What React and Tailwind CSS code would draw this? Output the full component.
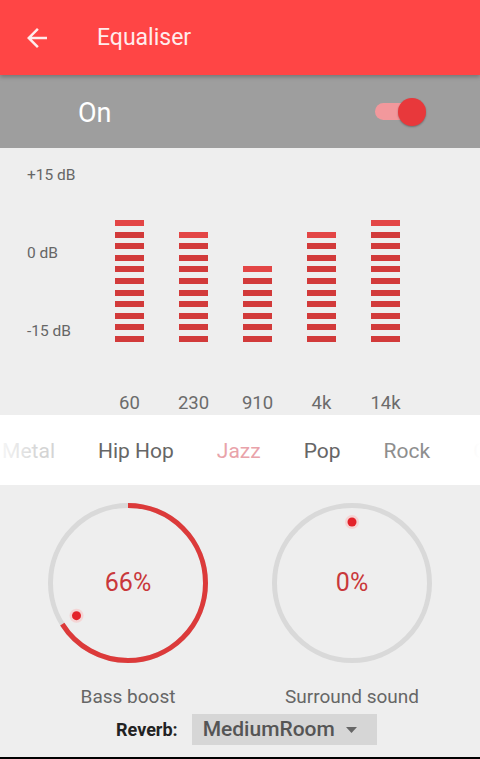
import React from 'react';

const bars = [
  { freq: '60', segs: 11 },
  { freq: '230', segs: 10 },
  { freq: '910', segs: 7 },
  { freq: '4k', segs: 10 },
  { freq: '14k', segs: 11 },
];

const presets = [
  { name: 'Hip Hop', cls: 'text-[#666666]' },
  { name: 'Jazz', cls: 'text-[#e9a3aa]' },
  { name: 'Pop', cls: 'text-[#666666]' },
  { name: 'Rock', cls: 'text-[#8e8e8e]' },
  { name: 'Custom', cls: 'text-[#eeeeee]' },
];

function Knob({ value, label }) {
  const r = 77.5;
  const c = 2 * Math.PI * r;
  const angle = (value / 100) * 2 * Math.PI;
  const dx = 80 + 61 * Math.sin(angle);
  const dy = 80 - 61 * Math.cos(angle);
  return (
    <div className="flex flex-col items-center">
      <div className="relative w-[160px] h-[160px]">
        <svg width="160" height="160" viewBox="0 0 160 160">
          <circle cx="80" cy="80" r={r} fill="none" stroke="#d9d9d9" strokeWidth="5" />
          {value > 0 && (
            <circle
              cx="80"
              cy="80"
              r={r}
              fill="none"
              stroke="#dc3a3a"
              strokeWidth="5"
              strokeDasharray={`${(value / 100) * c} ${c}`}
              transform="rotate(-90 80 80)"
            />
          )}
          <circle cx={dx} cy={dy} r="7" fill="#f7c9c9" opacity="0.7" />
          <circle cx={dx} cy={dy} r="4.5" fill="#e3222a" />
        </svg>
        <div className="absolute inset-0 flex items-center justify-center text-[25px] text-[#c9383a]">
          {value}%
        </div>
      </div>
      <div className="mt-[23px] text-[19px] leading-[22px] text-[#666666]">{label}</div>
    </div>
  );
}

export default function App() {
  return (
    <div
      className="w-[480px] h-[759px] overflow-hidden bg-[#eeeeee] flex flex-col"
      style={{ fontFamily: 'Roboto, "Noto Sans", sans-serif' }}
    >
      {/* toolbar */}
      <div className="relative z-10 h-[75px] shrink-0 bg-[#ff4545] flex items-center shadow-[0_2px_4px_rgba(0,0,0,0.25)]">
        <svg className="ml-[22px]" width="30" height="30" viewBox="0 0 24 24" fill="#ffecec">
          <path d="M20 11H7.83l5.59-5.59L12 4l-8 8 8 8 1.41-1.41L7.83 13H20v-2z" />
        </svg>
        <div className="ml-[45px] mt-[2px] text-[23px] text-[#ffecec]">Equaliser</div>
      </div>

      {/* on switch */}
      <div className="h-[73px] shrink-0 bg-[#9e9e9e] flex items-center">
        <div className="ml-[78px] mt-[4px] text-[27px] text-white">On</div>
        <div className="ml-auto mr-[54px] relative w-[51px] h-[28px] flex items-center">
          <div className="w-[38px] h-[17px] rounded-full bg-[#f2989c]" />
          <div className="absolute right-0 top-0 w-[28px] h-[28px] rounded-full bg-[#e8383b] shadow-[0_1px_2px_rgba(0,0,0,0.3)]" />
        </div>
      </div>

      {/* eq */}
      <div className="h-[267px] shrink-0 flex">
        <div className="w-[115px] shrink-0 pl-[27px] pt-[18px] flex flex-col gap-[60px] text-[15.5px] leading-[18px] text-[#666666]">
          <div>+15 dB</div>
          <div>0 dB</div>
          <div>-15 dB</div>
        </div>
        <div className="flex flex-col">
          <div className="h-[194px] flex items-end gap-[35px]">
            {bars.map((b) => (
              <div key={b.freq} className="w-[29px] flex flex-col gap-[5.6px]">
                {Array.from({ length: b.segs }).map((_, i) => (
                  <div
                    key={i}
                    className={`h-[6px] ${i === 0 ? 'bg-[#e34545]' : 'bg-[#d23a3a]'}`}
                  />
                ))}
              </div>
            ))}
          </div>
          <div className="mt-[50px] flex gap-[35px]">
            {bars.map((b) => (
              <div
                key={b.freq}
                className="w-[29px] flex justify-center whitespace-nowrap text-[18.5px] leading-[22px] text-[#6b6b6b]"
              >
                {b.freq}
              </div>
            ))}
          </div>
        </div>
      </div>

      {/* presets */}
      <div className="relative h-[70px] shrink-0 bg-white flex items-center overflow-hidden">
        <div className="mt-[3px] flex gap-[43px] whitespace-nowrap text-[21px]">
          <div className="w-[55px] shrink-0 flex justify-end text-[#d4d4d4]">
            <span>Heavy Metal</span>
          </div>
          {presets.map((p) => (
            <div key={p.name} className={p.cls}>
              {p.name}
            </div>
          ))}
        </div>
        <div className="absolute left-0 top-0 h-full w-[40px] bg-gradient-to-r from-white/80 to-transparent" />
        <div className="absolute right-0 top-0 h-full w-[20px] bg-gradient-to-l from-white to-transparent" />
      </div>

      {/* knobs */}
      <div className="mt-[18px] flex justify-center gap-[64px]">
        <Knob value={66} label="Bass boost" />
        <Knob value={0} label="Surround sound" />
      </div>

      {/* reverb */}
      <div className="mt-[6px] pl-[116px] flex items-center gap-[14px]">
        <div className="text-[18px] font-bold text-[#222222]">Reverb:</div>
        <div className="w-[185px] h-[31px] bg-[#d6d6d6] flex items-center pl-[11px]">
          <div className="text-[21px] font-medium text-[#555555]">MediumRoom</div>
          <svg className="ml-[11px]" width="11" height="6" viewBox="0 0 11 6">
            <path d="M0 0h11L5.5 6z" fill="#666666" />
          </svg>
        </div>
      </div>
      <div className="mt-auto h-[2px] bg-black" />
    </div>
  );
}
